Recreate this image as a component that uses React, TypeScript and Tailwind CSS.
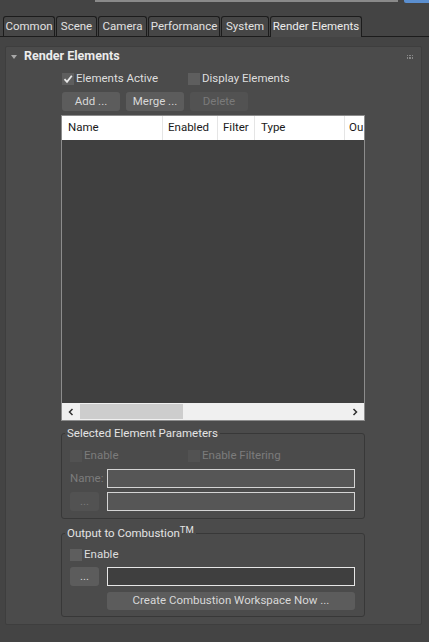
import React from "react";

const tabs = [
  { label: "Common", w: 52 },
  { label: "Scene", w: 41 },
  { label: "Camera", w: 49 },
  { label: "Performance", w: 72 },
  { label: "System", w: 48 },
];

function Check({ checked, disabled, label, className = "" }: { checked?: boolean; disabled?: boolean; label: string; className?: string }) {
  return (
    <div className={`flex items-center gap-[2px] h-[14px] ${className}`}>
      <div
        className={`w-[12px] h-[12px] flex items-center justify-center ${
          disabled ? "bg-[#525252]" : "bg-[#5e5e5e]"
        }`}
      >
        {checked && (
          <svg width="10" height="10" viewBox="0 0 10 10">
            <path d="M1.5 5.2 L4 7.8 L8.8 1.8" stroke="#e8e8e8" strokeWidth="1.8" fill="none" />
          </svg>
        )}
      </div>
      <span className={`whitespace-nowrap ${disabled ? "text-[#7c7c7c]" : "text-[#dedede]"}`}>{label}</span>
    </div>
  );
}

function Btn({ label, disabled, className = "" }: { label: string; disabled?: boolean; className?: string }) {
  return (
    <div
      className={`flex items-center justify-center rounded-[3px] whitespace-nowrap ${
        disabled ? "bg-[#525252] text-[#7a7a7a]" : "bg-[#5c5c5c] text-[#d8d8d8]"
      } ${className}`}
    >
      {label}
    </div>
  );
}

export default function App() {
  return (
    <div
      className="w-[429px] h-[642px] bg-[#444444] overflow-hidden text-[11.5px] leading-none text-[#dedede]"
      style={{ fontFamily: 'Roboto, "Noto Sans", sans-serif' }}
    >
      {/* top field remnant */}
      <div className="flex h-[16px]">
        <div className="ml-[95px] w-[303px] h-[2px] bg-[#8a8a8a]" />
        <div className="ml-[6px] w-[25px] h-[3px] bg-[#5b8fd0] rounded-bl-[2px]" />
      </div>

      {/* tabs */}
      <div className="flex items-end h-[21px] pl-[3px] border-b border-[#1c1c1c]">
        {tabs.map((t) => (
          <div
            key={t.label}
            style={{ width: t.w }}
            className="h-[20px] mr-[1px] flex items-center justify-center whitespace-nowrap bg-[#464646] border border-b-0 border-[#1c1c1c] rounded-t-[3px] text-[#e2e2e2]"
          >
            {t.label}
          </div>
        ))}
        <div className="w-[92px] h-[21px] -mb-[1px] flex items-center justify-center whitespace-nowrap bg-[#4a4a4a] border border-b-0 border-[#1c1c1c] rounded-t-[3px] text-[#ececec]">
          Render Elements
        </div>
      </div>

      {/* rollout panel */}
      <div className="ml-[5px] mt-[9px] w-[417px] h-[579px] bg-[#4b4b4b] border border-[#3e3e3e] rounded-[2px]">
        <div className="flex items-center h-[19px] pl-[5px] pr-[8px]">
          <svg width="6" height="6" viewBox="0 0 6 6" className="mr-[7px]">
            <path d="M0 1 L6 1 L3 5 Z" fill="#a8a8a8" />
          </svg>
          <span className="font-bold text-[12.5px] text-[#ececec]">Render Elements</span>
          <div className="ml-auto grid grid-cols-3 gap-[1px]">
            {Array.from({ length: 6 }).map((_, i) => (
              <div key={i} className="w-[1.5px] h-[1.5px] bg-[#888]" />
            ))}
          </div>
        </div>

        <div className="pl-[56px]">
          <div className="flex mt-[6px]">
            <Check checked label="Elements Active" className="w-[126px]" />
            <Check label="Display Elements" />
          </div>

          <div className="flex gap-[6px] mt-[6px]">
            <Btn label="Add ..." className="w-[58px] h-[19px]" />
            <Btn label="Merge ..." className="w-[58px] h-[19px]" />
            <Btn label="Delete" disabled className="w-[58px] h-[19px]" />
          </div>

          {/* list */}
          <div className="mt-[4px] -ml-[1px] w-[304px] h-[306px] border border-[#8c8c8c] bg-[#404040] flex flex-col">
            <div className="h-[24px] bg-white text-[#1a1a1a] flex">
              <div className="w-[101px] border-r border-[#e5e5e5] flex items-center pl-[6px]">Name</div>
              <div className="w-[55px] border-r border-[#e5e5e5] flex items-center pl-[5px]">Enabled</div>
              <div className="w-[37px] border-r border-[#e5e5e5] flex items-center pl-[5px]">Filter</div>
              <div className="w-[90px] border-r border-[#e5e5e5] flex items-center pl-[6px]">Type</div>
              <div className="w-[18px] flex items-center pl-[4px] overflow-hidden whitespace-nowrap">Ou</div>
            </div>
            <div className="flex-1" />
            <div className="h-[17px] bg-[#f0f0f0] flex items-center">
              <div className="w-[18px] flex justify-center">
                <svg width="8" height="8" viewBox="0 0 8 8">
                  <path d="M5.5 1 L2.5 4 L5.5 7" stroke="#303030" strokeWidth="1.5" fill="none" />
                </svg>
              </div>
              <div className="w-[103px] h-[15px] bg-[#cdcdcd]" />
              <div className="flex-1" />
              <div className="w-[18px] flex justify-center">
                <svg width="8" height="8" viewBox="0 0 8 8">
                  <path d="M2.5 1 L5.5 4 L2.5 7" stroke="#303030" strokeWidth="1.5" fill="none" />
                </svg>
              </div>
            </div>
          </div>

          {/* Selected Element Parameters */}
          <div className="mt-[12px] -ml-[1px] w-[304px] h-[86px] border border-[#383838] rounded-[3px] relative">
            <div className="absolute -top-[6px] left-[3px] px-[2px] bg-[#4b4b4b] text-[#e4e4e4] whitespace-nowrap">
              Selected Element Parameters
            </div>
            <div className="flex pl-[8px] mt-[15px]">
              <Check disabled label="Enable" className="w-[118px]" />
              <Check disabled label="Enable Filtering" />
            </div>
            <div className="flex items-center pl-[8px] mt-[6px]">
              <span className="w-[37px] text-[#7c7c7c]">Name:</span>
              <div className="w-[248px] h-[19px] border border-[#d4d4d4] bg-[#565656]" />
            </div>
            <div className="flex items-center pl-[8px] mt-[4px]">
              <Btn label="..." disabled className="w-[29px] h-[19px] mr-[8px]" />
              <div className="w-[248px] h-[19px] border border-[#d4d4d4] bg-[#565656]" />
            </div>
          </div>

          {/* Output to Combustion */}
          <div className="mt-[14px] -ml-[1px] w-[304px] h-[84px] border border-[#383838] rounded-[3px] relative">
            <div className="absolute -top-[6px] left-[3px] px-[2px] bg-[#4b4b4b] text-[#e4e4e4] whitespace-nowrap">
              Output to Combustion<span className="text-[9.5px] relative -top-[4px]">TM</span>
            </div>
            <div className="flex pl-[8px] mt-[14px]">
              <Check label="Enable" />
            </div>
            <div className="flex items-center pl-[8px] mt-[5px]">
              <Btn label="..." className="w-[29px] h-[19px] mr-[8px]" />
              <div className="w-[248px] h-[19px] border border-[#e6e6e6] bg-[#3f3f3f]" />
            </div>
            <div className="flex pl-[45px] mt-[6px]">
              <Btn label="Create Combustion Workspace Now ..." className="w-[248px] h-[18px] bg-[#5a5a5a] text-[#cfcfcf]" />
            </div>
          </div>
        </div>
      </div>
    </div>
  );
}
